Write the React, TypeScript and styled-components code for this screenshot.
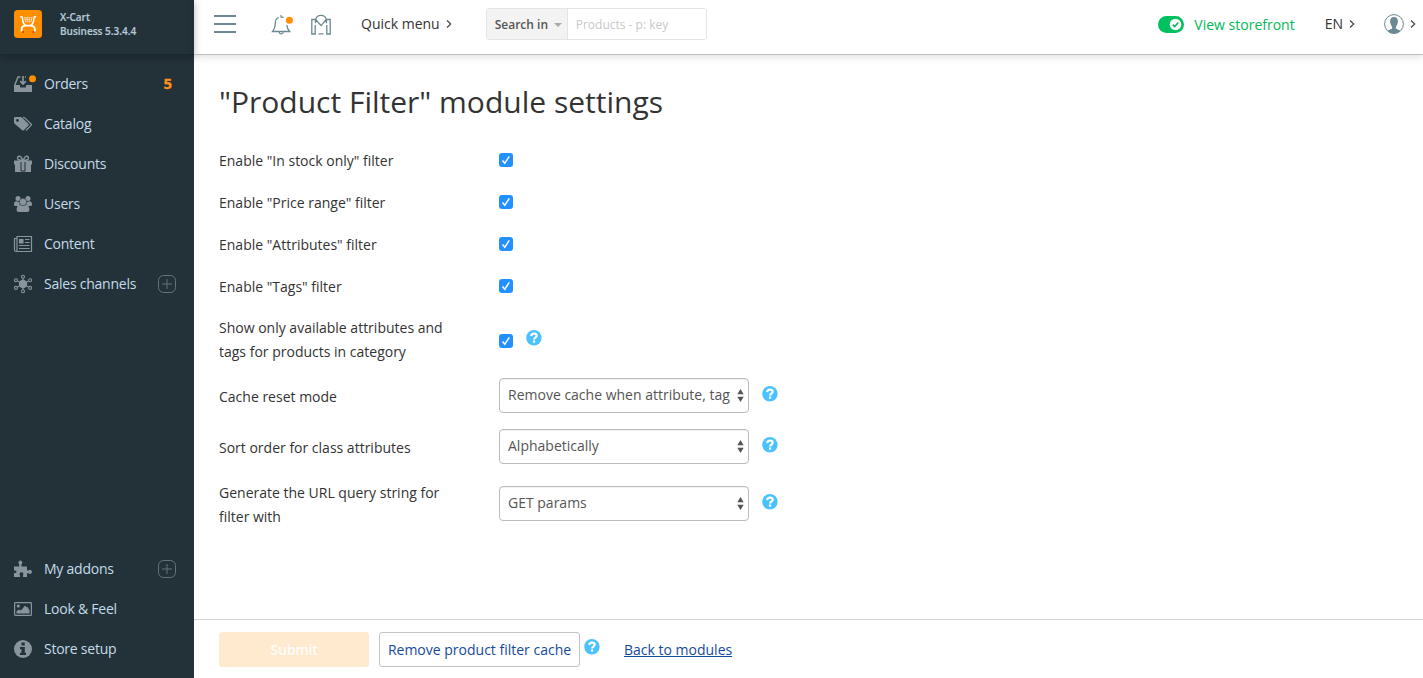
import React from "react";
import styled, { createGlobalStyle } from "styled-components";

const GlobalStyle = createGlobalStyle`
  * { box-sizing: border-box; }
  html, body { margin: 0; padding: 0; }
  body { background: #fff; font-family: "Open Sans", "Noto Sans", sans-serif; color: #333; font-size: 14px; overflow: hidden; }
  button, input { font-family: inherit; }
`;

const Page = styled.div`
  display: flex;
  width: 100%;
  height: 100vh;
`;

const Sidebar = styled.aside`
  display: flex;
  flex-direction: column;
  flex: 0 0 194px;
  background: #233238;
  padding-bottom: 9px;
`;

const Brand = styled.div`
  display: flex;
  align-items: flex-start;
  height: 55px;
  padding: 10px 14px 0;
  gap: 18px;
  border-bottom: 1px solid #1c282d;
  margin-bottom: 10px;
  box-shadow: 0 2px 8px rgba(0, 0, 0, 0.28);
`;

const BrandText = styled.div`
  font-size: 10px;
  line-height: 14px;
  font-weight: 600;
  color: #b5c8d6;
  white-space: nowrap;
  -webkit-text-stroke: 0.2px #b5c8d6;
`;

const MenuGroup = styled.nav<{ $bottom?: boolean }>`
  display: flex;
  flex-direction: column;
  margin-top: ${(p) => (p.$bottom ? "auto" : "-1px")};
`;

const MenuItem = styled.a`
  display: flex;
  align-items: center;
  height: 40px;
  padding: 0 18px 0 14px;
  color: #c3dbea;
  text-decoration: none;
`;

const MenuIcon = styled.span`
  display: flex;
  width: 30px;
  color: #89949b;
  svg { overflow: visible; }
`;

const MenuLabel = styled.span`
  flex: 1;
  font-size: 14px;
  line-height: 20px;
  white-space: nowrap;
  letter-spacing: -0.24px;
`;

const Count = styled.span`
  color: #ff8f1c;
  font-weight: 700;
  font-size: 15px;
  line-height: 20px;
  margin: 0 4px 2px 0;
  -webkit-text-stroke: 0.3px #ff8f1c;
`;

const Content = styled.div`
  display: flex;
  flex-direction: column;
  flex: 1;
  min-width: 0;
`;

const TopBar = styled.header`
  display: flex;
  align-items: center;
  height: 55px;
  flex: none;
  padding: 0 7px 6px 20px;
  border-bottom: 1px solid #bfbfbf;
  box-shadow: 0 2px 8px rgba(0, 0, 0, 0.13);
  white-space: nowrap;
`;

const IconButton = styled.span<{ $gap: number }>`
  display: flex;
  color: #6c8993;
  margin-right: ${(p) => p.$gap}px;
`;

const TopLink = styled.span<{ $gap?: number }>`
  display: flex;
  align-items: center;
  gap: 6px;
  line-height: 20px;
  color: #333;
  margin-right: ${(p) => p.$gap ?? 0}px;
`;

const Search = styled.div`
  display: flex;
  width: 221px;
  height: 32px;
  border: 1px solid #e4e4e4;
  border-radius: 3px;
  overflow: hidden;
  font-size: 12px;
`;

const SearchScope = styled.div`
  display: flex;
  align-items: center;
  justify-content: space-between;
  width: 81px;
  padding: 0 5px 0 8px;
  background: #f3f3f3;
  border-right: 1px solid #e4e4e4;
  color: #555;
  font-weight: 600;
  svg { margin-top: 2px; }
`;

const SearchInput = styled.input`
  flex: 1;
  min-width: 0;
  border: 0;
  outline: 0;
  padding: 0 8px;
  font-size: 12px;
  &::placeholder { color: #c8c8c8; opacity: 1; }
`;

const Storefront = styled.span`
  display: flex;
  align-items: center;
  gap: 10px;
  margin-left: auto;
  margin-right: 30px;
  color: #00b956;
  line-height: 20px;
  padding-top: 1px;
`;

const Main = styled.main`
  flex: 1;
  padding: 27px 25px 0;
`;

const Title = styled.h1`
  margin: 0 0 18px;
  font-size: 30px;
  line-height: 40px;
  font-weight: 400;
  color: #333;
`;

const Row = styled.div<{ $height: number }>`
  display: flex;
  align-items: center;
  height: ${(p) => p.$height}px;
`;

const Label = styled.label<{ $raised?: boolean }>`
  width: 240px;
  margin-right: 40px;
  padding-bottom: ${(p) => (p.$raised ? 2 : 0)}px;
  line-height: 24px;
  color: #333;
`;

const Checkbox = styled.span<{ $drop?: boolean }>`
  display: flex;
  align-items: center;
  justify-content: center;
  width: 14px;
  height: 14px;
  border-radius: 3px;
  background: #2390ff;
  margin-bottom: ${(p) => (p.$drop ? -2 : 2)}px;
  margin-right: 13px;
`;

const Select = styled.div`
  display: flex;
  align-items: center;
  justify-content: space-between;
  width: 250px;
  height: 35px;
  padding: 0 4px 2px 8px;
  margin-right: 13px;
  margin-bottom: 4px;
  border: 1px solid #bbb;
  border-radius: 4px;
  box-shadow: inset 0 1px 1px rgba(0, 0, 0, 0.06);
  color: #555;
  white-space: nowrap;
  svg { margin-top: 2px; }
`;

const HelpMark = styled.span<{ $lift: number }>`
  display: flex;
  margin-bottom: ${(p) => p.$lift}px;
`;

const Footer = styled.footer`
  display: flex;
  align-items: center;
  flex: none;
  height: 59px;
  padding: 1px 25px 0;
  border-top: 1px solid #d4d4d4;
`;

const Button = styled.button<{ $primary?: boolean }>`
  width: ${(p) => (p.$primary ? 150 : 201)}px;
  height: 35px;
  padding: 0;
  margin-right: ${(p) => (p.$primary ? 10 : 4)}px;
  border: 1px solid ${(p) => (p.$primary ? "#ffe9cf" : "#c4c4c4")};
  border-radius: 3px;
  background: ${(p) => (p.$primary ? "#ffe9cf" : "#fff")};
  color: ${(p) => (p.$primary ? "#fffdfa" : "#154a9b")};
  font-size: 14px;
  font-weight: ${(p) => (p.$primary ? 600 : 400)};
  letter-spacing: ${(p) => (p.$primary ? -0.15 : 0)}px;
  white-space: nowrap;
`;

const BackLink = styled.a`
  margin-left: 24px;
  color: #154a9b;
  text-decoration: underline;
  line-height: 20px;
`;

const Logo = () => (
  <svg width="28" height="28" viewBox="0 0 28 28">
    <rect width="28" height="28" rx="3.5" fill="#ff8e00" />
    <path d="M6.200 6.800h1.300q1 0 1 1.200c0 3.800 1.100 6.300 3.300 7.400M22.200 6.800h-1.300q-1 0-1 1.200c0 3.800-1.100 6.300-3.300 7.400" fill="none" stroke="#fff" strokeWidth="1.500" />
    <path d="M7.600 21.500v-2c0-2.600 1.400-3.900 4.200-3.900h4.800c2.800 0 4.200 1.300 4.200 3.900v2" fill="none" stroke="#fff" strokeWidth="1.900" />
    <g fill="#fff">
      <path d="M10.200 7.300h1.500v1.300h-1.500zM12.400 7.300h1.500v1.300h-1.500zM14.600 7.300h1.500v1.300h-1.500zM16.800 7.300h1.500v1.300h-1.500z" />
      <path d="M10.600 9.300h1.200v1.200h-1.200zM12.400 9.300h1.500v1.200h-1.500zM14.600 9.300h1.500v1.200h-1.500zM16.800 9.300h1.200v1.200h-1.200z" />
      <path d="M11.200 11.200h.8v1.100h-.8zM12.400 11.200h1.500v1.100h-1.500zM14.600 11.200h1.500v1.100h-1.500zM16.600 11.200h.8v1.100h-.8z" />
    </g>
    <circle cx="9.100" cy="22" r="1" fill="#cf3e0c" />
    <circle cx="19.300" cy="22" r="1" fill="#cf3e0c" />
  </svg>
);

const iconPaths: Record<string, React.ReactNode> = {
  orders: (
    <>
      <path d="M0 10h6v1.500c0 .6.4 1 1 1h4c.6 0 1-.4 1-1V10h6v7H0z" fill="currentColor" />
      <path d="M.8 10L4 2h2.500" fill="none" stroke="currentColor" strokeWidth="1.500" />
      <path d="M9 1v8M6.200 6.200L9 9l2.800-2.800M11 2h1" fill="none" stroke="currentColor" strokeWidth="1.700" />
      <circle cx="18.500" cy="3.700" r="3.500" fill="#ff8e00" />
    </>
  ),
  catalog: (
    <>
      <path fillRule="evenodd" fill="currentColor" d="M1.300 2h5.200c.6 0 1 .2 1.400.6l6.600 6.300c.5.5.5 1.100 0 1.600l-4.700 4.700c-.5.5-1.100.5-1.600 0L.6 8.700C.2 8.300 0 7.800 0 7.300v-4C0 2.500.5 2 1.300 2zm2.200 2a1.400 1.400 0 100 2.800A1.400 1.400 0 003.500 4z" />
      <path d="M9 2.300c1 0 1.400.2 2 .8l6 5.900c.5.500.5.900 0 1.400l-5 5.100" fill="none" stroke="currentColor" strokeWidth="1.300" />
    </>
  ),
  gift: (
    <>
      <path d="M0 5.500h18v4h-1V17H1V9.500H0z" fill="currentColor" />
      <path d="M7 7v9h4V7" fill="none" stroke="#233238" strokeWidth="1" />
      <path d="M9 5.500C7.500 2 6.200 1 5 1.200c-2 .3-2 3.100 0 3.800 1.200.4 2.700.5 4 .5 1.300 0 2.800-.1 4-.5 2-.7 2-3.500 0-3.800-1.200-.2-2.500.8-4 4.300z" fill="none" stroke="currentColor" strokeWidth="1.400" />
    </>
  ),
  users: (
    <g fill="currentColor">
      <circle cx="4" cy="3.600" r="2.500" />
      <circle cx="14" cy="3.600" r="2.500" />
      <path d="M0 9.800C0 7.400.8 6.200 2 6.200l3.700.8v3.400L4 11H1c-.7 0-1-.5-1-1.200zM18 9.800c0-2.400-.8-3.600-2-3.600l-3.700.8v3.400L14 11h3c.7 0 1-.5 1-1.200z" />
      <circle cx="9" cy="7" r="3.700" stroke="#233238" strokeWidth=".5" />
      <path d="M2.600 15c0-3 1-5 3.100-5 1 0 1.600 1 3.300 1s2.300-1 3.300-1c2.100 0 3.100 2 3.100 5 0 1.300-.9 2-2 2H4.600c-1.100 0-2-.7-2-2z" />
    </g>
  ),
  content: (
    <>
      <path d="M3 1.500h14.500v15H2c-1 0-1.500-.7-1.500-1.500V3.500H3zM3 3.500V15c0 1-.4 1.500-1 1.500" fill="none" stroke="currentColor" strokeWidth="1.200" />
      <path d="M5 4h4.500v4.500H5z" fill="currentColor" />
      <path d="M11 4.500h4.500M11 7.500h4.500M5 10.500h10.500M5 13.500h10.500" stroke="currentColor" strokeWidth="1.200" />
    </>
  ),
  channels: (
    <>
      <circle cx="9" cy="9" r="4.200" fill="currentColor" />
      <path d="M9 3v12M3.500 6l11 6M14.500 6l-11 6" stroke="currentColor" strokeWidth="1.200" />
      <g fill="#233238" stroke="currentColor" strokeWidth="1.100">
        <circle cx="9" cy="1.700" r="1.500" />
        <circle cx="9" cy="16.300" r="1.500" />
        <circle cx="1.900" cy="5.200" r="1.500" />
        <circle cx="16.100" cy="5.200" r="1.500" />
        <circle cx="1.900" cy="12.900" r="1.500" />
        <circle cx="16.100" cy="12.900" r="1.500" />
      </g>
    </>
  ),
  addons: (
    <path fill="currentColor" d="M0 6.500h5.200V4.300a2 2 0 112.300 0v2.200H13v4h1.500a2 2 0 110 2.700H13V17H9v-1.800c.8-1 .6-3-1.500-3s-2.400 2-1.500 3V17H0v-4h1.500c1.300 0 1.300-2.500 0-2.500H0z" />
  ),
  look: (
    <>
      <rect x=".6" y="2.600" width="16.800" height="12.800" rx=".7" fill="none" stroke="currentColor" strokeWidth="1.200" />
      <circle cx="4.300" cy="6" r="1.600" fill="currentColor" />
      <path d="M2.500 13.500v-2.200L5 9.500l2 1 4-5 1.500 1.800.8-.5 2.200 3.500v3.200z" fill="currentColor" />
    </>
  ),
  info: (
    <>
      <circle cx="9" cy="9" r="9" fill="currentColor" />
      <path d="M7.500 2.500h3.200v3H7.500zM6 7h4.800v5.800H12V15H6v-2.200h1.500V9.200H6z" fill="#233238" />
    </>
  ),
};

const Glyph = ({ name }: { name: string }) => (
  <svg width="18" height="18" viewBox="0 0 18 18">{iconPaths[name]}</svg>
);

const Plus = () => (
  <svg width="18" height="18" viewBox="0 0 18 18" fill="none" stroke="#65737a" strokeWidth="1">
    <rect x=".5" y=".5" width="17" height="17" rx="5" />
    <path d="M4 9h10M9 4v10" />
  </svg>
);

const Chevron = () => (
  <svg width="6" height="8" viewBox="0 0 6 8">
    <path d="M1 .5L4.700 4 1 7.500" fill="none" stroke="#444" strokeWidth="1.200" />
  </svg>
);

const Help = ({ lift = 0 }: { lift?: number }) => (
  <HelpMark $lift={lift}>
    <svg width="16" height="16" viewBox="0 0 16 16">
      <circle cx="7.900" cy="7.700" r="7.700" fill="#4ac2ff" />
      <path d="M5.200 6.100C5.300 4.400 6.400 3.600 8 3.600s2.700.9 2.700 2.200C10.700 7.500 8.100 7.600 8.100 9.500" fill="none" stroke="#fff" strokeWidth="2.200" />
      <path d="M6.900 10.500h2.300v2.200H6.900z" fill="#fff" />
    </svg>
  </HelpMark>
);

const Check = ({ drop }: { drop?: boolean }) => (
  <Checkbox $drop={drop} role="checkbox" aria-checked="true">
    <svg width="14" height="14" viewBox="0 0 14 14">
      <path d="M3.500 7.600l2.300 2.600 4.500-6.800" fill="none" stroke="#fff" strokeWidth="1.500" />
    </svg>
  </Checkbox>
);

const Arrows = () => (
  <svg width="7" height="13" viewBox="0 0 7 13">
    <path d="M3.500 0l3.200 5.300H.3zM3.500 13L.3 7.700h6.400z" fill="#555" />
  </svg>
);

type Entry = { icon: string; label: string; count?: number; plus?: boolean };

const topMenu: Entry[] = [
  { icon: "orders", label: "Orders", count: 5 },
  { icon: "catalog", label: "Catalog" },
  { icon: "gift", label: "Discounts" },
  { icon: "users", label: "Users" },
  { icon: "content", label: "Content" },
  { icon: "channels", label: "Sales channels", plus: true },
];

const bottomMenu: Entry[] = [
  { icon: "addons", label: "My addons", plus: true },
  { icon: "look", label: "Look & Feel" },
  { icon: "info", label: "Store setup" },
];

const Menu = ({ items, bottom }: { items: Entry[]; bottom?: boolean }) => (
  <MenuGroup $bottom={bottom}>
    {items.map((item) => (
      <MenuItem key={item.label}>
        <MenuIcon><Glyph name={item.icon} /></MenuIcon>
        <MenuLabel>{item.label}</MenuLabel>
        {item.count && <Count>{item.count}</Count>}
        {item.plus && <Plus />}
      </MenuItem>
    ))}
  </MenuGroup>
);

const filters = ["In stock only", "Price range", "Attributes", "Tags"];

const selects = [
  { label: "Cache reset mode", value: "Remove cache when attribute, tag", height: 51 },
  { label: "Sort order for class attributes", value: "Alphabetically", height: 51 },
  { label: "Generate the URL query string for filter with", value: "GET params", height: 63 },
];

export default function App() {
  return (
    <>
      <GlobalStyle />
      <Page>
        <Sidebar>
          <Brand>
            <Logo />
            <BrandText>X-Cart<br />Business 5.3.4.4</BrandText>
          </Brand>
          <Menu items={topMenu} />
          <Menu items={bottomMenu} bottom />
        </Sidebar>
        <Content>
          <TopBar>
            <IconButton $gap={35}>
              <svg width="22" height="18" viewBox="0 0 22 18">
                <path d="M0 1h22M0 9h22M0 17h22" stroke="currentColor" strokeWidth="1.800" />
              </svg>
            </IconButton>
            <IconButton $gap={17}>
              <svg width="23" height="22" viewBox="0 0 23 22" fill="none" stroke="currentColor" strokeWidth="1.300">
                <path d="M7.800 4.500C5.100 5.300 4.300 7.500 4.300 10.500c0 3.500-.9 5.900-2.700 8h17c-1.700-1.800-2.500-3.700-2.800-6.500M9.800 2.200l.4 1.800c.9 0 1.500.1 2.300.5M8 19c.4 2.400 3.900 2.400 4.300 0" />
                <circle cx="18.400" cy="7.300" r="3.500" fill="#ff8e00" stroke="none" />
              </svg>
            </IconButton>
            <IconButton $gap={30}>
              <svg width="20" height="22" viewBox="0 0 20 22" fill="none" stroke="currentColor" strokeWidth="1.300">
                <path d="M4.700 6.300C5.300 3.700 7.300 2.300 10 2.300s4.700 1.400 5.300 4M4.500 6.500H.8v14.500h3.400v-9M15.500 6.500h3.700v14.500h-3.400v-9M4.700 6.500L10 12.600l5.300-6.100M4.500 7.300v3M15.500 7.300v3M7.500 20.800h5" />
              </svg>
            </IconButton>
            <TopLink $gap={34}>Quick menu <Chevron /></TopLink>
            <Search>
              <SearchScope>
                Search in
                <svg width="8" height="4" viewBox="0 0 8 4"><path d="M0 0h8L4 4z" fill="#aaa" /></svg>
              </SearchScope>
              <SearchInput placeholder="Products - p: key" />
            </Search>
            <Storefront>
              <svg width="26" height="17" viewBox="0 0 26 17">
                <rect width="26" height="17" rx="8.500" fill="#00c060" />
                <circle cx="17.500" cy="8.500" r="5.800" fill="#fff" />
                <path d="M14.700 8.600l2 2 3.600-4" fill="none" stroke="#00b956" strokeWidth="1.500" />
              </svg>
              View storefront
            </Storefront>
            <TopLink $gap={29}>EN <Chevron /></TopLink>
            <TopLink>
              <svg width="20" height="20" viewBox="0 0 20 20">
                <circle cx="10" cy="10" r="9.400" fill="#fff" stroke="#6c8993" strokeWidth="1" />
                <path d="M3.500 17c1-1.300 3-1.500 4.300-2.200.5-.4.5-1.800 0-2.500C6.800 11 6 9 6.100 7c.1-2.500 1.600-4 3.900-4s3.800 1.500 3.900 4c.1 2-.7 4-1.700 5.300-.5.700-.5 2.100 0 2.500 1.300.7 3.300.9 4.300 2.200-3.500 3.500-9.500 3.500-13 0z" fill="#6c8993" />
              </svg>
              <Chevron />
            </TopLink>
          </TopBar>
          <Main>
            <Title>"Product Filter" module settings</Title>
            {filters.map((name) => (
              <Row key={name} $height={42}>
                <Label>{`Enable "${name}" filter`}</Label>
                <Check />
              </Row>
            ))}
            <Row $height={64}>
              <Label>Show only available attributes and tags for products in category</Label>
              <Check drop />
              <Help lift={4} />
            </Row>
            {selects.map((s) => (
              <Row key={s.label} $height={s.height}>
                <Label $raised>{s.label}</Label>
                <Select>{s.value}<Arrows /></Select>
                <Help lift={7} />
              </Row>
            ))}
          </Main>
          <Footer>
            <Button $primary>Submit</Button>
            <Button>Remove product filter cache</Button>
            <Help lift={5} />
            <BackLink>Back to modules</BackLink>
          </Footer>
        </Content>
      </Page>
    </>
  );
}
